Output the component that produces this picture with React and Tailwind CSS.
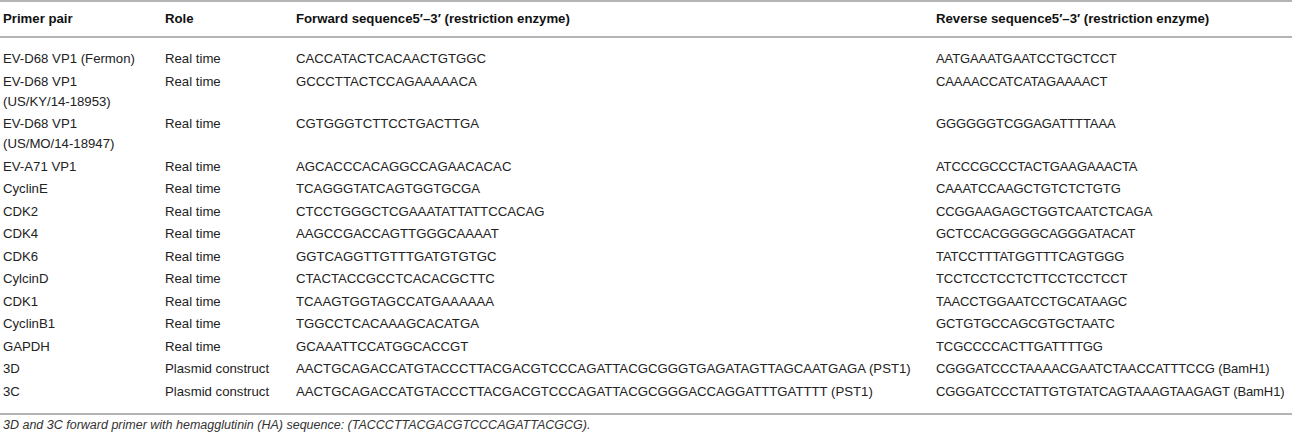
const rows = [
  { name: ["EV-D68 VP1 (Fermon)"], role: "Real time", fwd: "CACCATACTCACAACTGTGGC", rev: "AATGAAATGAATCCTGCTCCT" },
  { name: ["EV-D68 VP1", "(US/KY/14-18953)"], role: "Real time", fwd: "GCCCTTACTCCAGAAAAACA", rev: "CAAAACCATCATAGAAAACT" },
  { name: ["EV-D68 VP1", "(US/MO/14-18947)"], role: "Real time", fwd: "CGTGGGTCTTCCTGACTTGA", rev: "GGGGGGTCGGAGATTTTAAA" },
  { name: ["EV-A71 VP1"], role: "Real time", fwd: "AGCACCCACAGGCCAGAACACAC", rev: "ATCCCGCCCTACTGAAGAAACTA" },
  { name: ["CyclinE"], role: "Real time", fwd: "TCAGGGTATCAGTGGTGCGA", rev: "CAAATCCAAGCTGTCTCTGTG" },
  { name: ["CDK2"], role: "Real time", fwd: "CTCCTGGGCTCGAAATATTATTCCACAG", rev: "CCGGAAGAGCTGGTCAATCTCAGA" },
  { name: ["CDK4"], role: "Real time", fwd: "AAGCCGACCAGTTGGGCAAAAT", rev: "GCTCCACGGGGCAGGGATACAT" },
  { name: ["CDK6"], role: "Real time", fwd: "GGTCAGGTTGTTTGATGTGTGC", rev: "TATCCTTTATGGTTTCAGTGGG" },
  { name: ["CylcinD"], role: "Real time", fwd: "CTACTACCGCCTCACACGCTTC", rev: "TCCTCCTCCTCTTCCTCCTCCT" },
  { name: ["CDK1"], role: "Real time", fwd: "TCAAGTGGTAGCCATGAAAAAA", rev: "TAACCTGGAATCCTGCATAAGC" },
  { name: ["CyclinB1"], role: "Real time", fwd: "TGGCCTCACAAAGCACATGA", rev: "GCTGTGCCAGCGTGCTAATC" },
  { name: ["GAPDH"], role: "Real time", fwd: "GCAAATTCCATGGCACCGT", rev: "TCGCCCCACTTGATTTTGG" },
  { name: ["3D"], role: "Plasmid construct", fwd: "AACTGCAGACCATGTACCCTTACGACGTCCCAGATTACGCGGGTGAGATAGTTAGCAATGAGA (PST1)", rev: "CGGGATCCCTAAAACGAATCTAACCATTTCCG (BamH1)" },
  { name: ["3C"], role: "Plasmid construct", fwd: "AACTGCAGACCATGTACCCTTACGACGTCCCAGATTACGCGGGACCAGGATTTGATTTT (PST1)", rev: "CGGGATCCCTATTGTGTATCAGTAAAGTAAGAGT (BamH1)" },
];

const App = () => {
  return (
    <div className="w-[1292px] h-[441px] overflow-hidden bg-white font-['Liberation_Sans',Arial,sans-serif] text-[13.2px] text-[#222]">
      <table className="w-full table-fixed border-collapse">
        <colgroup>
          <col className="w-[162px]" />
          <col className="w-[131px]" />
          <col className="w-[640px]" />
          <col />
        </colgroup>
        <thead>
          <tr className="border-t-2 border-b-2 border-[#b4b4b4]">
            <th className="h-[36px] pl-[3px] text-left font-bold text-[#111]">Primer pair</th>
            <th className="h-[36px] pl-[3px] text-left font-bold text-[#111]">Role</th>
            <th className="h-[36px] pl-[3px] text-left font-bold text-[#111]">Forward sequence5′–3′ (restriction enzyme)</th>
            <th className="h-[36px] pl-[3px] text-left font-bold text-[#111]">Reverse sequence5′–3′ (restriction enzyme)</th>
          </tr>
        </thead>
        <tbody className="border-b-2 border-[#b4b4b4]">
          {rows.map((r, i) => {
            const pad = i === 0 ? "pt-[11px] pb-[1.5px]" : i === rows.length - 1 ? "pt-px pb-[11px]" : "pt-px pb-[1.5px]";
            return (
              <tr key={i}>
                <td className={`${pad} pl-[3px] align-top leading-5`}>
                  {r.name.map((n, j) => (
                    <div key={j}>{n}</div>
                  ))}
                </td>
                <td className={`${pad} pl-[3px] align-top leading-5`}>{r.role}</td>
                <td className={`${pad} pl-[3px] align-top leading-5 whitespace-nowrap`}>{r.fwd}</td>
                <td className={`${pad} pl-[3px] align-top leading-5 whitespace-nowrap text-[13px] tracking-[-0.1px]`}>{r.rev}</td>
              </tr>
            );
          })}
        </tbody>
      </table>
      <p className="pl-[3px] pt-[3px] text-[12.5px] leading-[15px] italic text-[#333]">
        3D and 3C forward primer with hemagglutinin (HA) sequence: (TACCCTTACGACGTCCCAGATTACGCG).
      </p>
    </div>
  );
};

export default App;
